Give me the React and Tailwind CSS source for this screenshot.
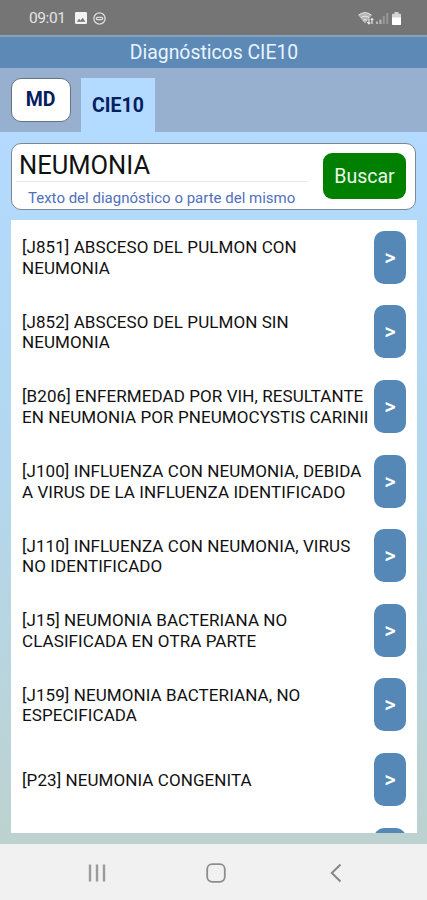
import React from "react";

const rows = [
  { lines: ["[J851] ABSCESO DEL PULMON CON", "NEUMONIA"] },
  { lines: ["[J852] ABSCESO DEL PULMON SIN", "NEUMONIA"] },
  { lines: ["[B206] ENFERMEDAD POR VIH, RESULTANTE", "EN NEUMONIA POR PNEUMOCYSTIS CARINII"] },
  { lines: ["[J100] INFLUENZA CON NEUMONIA, DEBIDA", "A VIRUS DE LA INFLUENZA IDENTIFICADO"] },
  { lines: ["[J110] INFLUENZA CON NEUMONIA, VIRUS", "NO IDENTIFICADO"] },
  { lines: ["[J15] NEUMONIA BACTERIANA NO", "CLASIFICADA EN OTRA PARTE"] },
  { lines: ["[J159] NEUMONIA BACTERIANA, NO", "ESPECIFICADA"] },
  { lines: ["[P23] NEUMONIA CONGENITA"] },
  { lines: [] },
];

function StatusBar() {
  return (
    <div className="flex h-[35px] shrink-0 items-center bg-[#757575] pl-[29px] pr-[26px] pt-[1px] text-[#e4e4e4]">
      <span className="w-[38px] pt-[2px] text-[15.500px] leading-none tracking-[-0.400px]">09:01</span>
      <svg className="ml-[8px]" width="12" height="12" viewBox="0 0 12 12">
        <path fillRule="evenodd" fill="#f2f2f2" d="M1.2 0h9.6Q12 0 12 1.2v9.6q0 1.2-1.2 1.2H1.2Q0 12 0 10.8V1.2Q0 0 1.2 0ZM1.8 9.8h8.6L7.7 5.8 5.6 8.4 4.1 6.8Z" />
      </svg>
      <svg className="ml-[6px]" width="13" height="13" viewBox="0 0 13 13" fill="none" stroke="#dedede" strokeWidth="1.3">
        <circle cx="6.5" cy="6.5" r="5.6" />
        <rect x="3.3" y="5.4" width="6.4" height="2.2" rx="1" />
      </svg>
      <div className="ml-auto flex items-center">
        <svg width="16" height="13" viewBox="0 0 16 13">
          <path d="M0.3 3.2Q7 -2 13.7 3.2L7 11.5Z" fill="#b5b5b5" />
          <path d="M0.5 3.1Q7 -1.9 13.5 3.1M2.9 5.7Q7 2.6 11.1 5.7M5 8.3Q7 6.8 9 8.3" fill="none" stroke="#e8e8e8" strokeWidth="1" />
          <path d="M11 6.5v5.5M9.3 10.2 11 12l1.3-1.5M14 12V6.5M12.8 8 14 6.5 15.3 8" fill="none" stroke="#f0f0f0" strokeWidth="1.1" />
        </svg>
        <svg className="ml-[2px]" width="13" height="12" viewBox="0 0 13 12">
          <path d="M0 9.5h2V12H0zM3.4 7.5h2V12h-2z" fill="#b8b8b8" />
          <path d="M6.8 4h2v8h-2zM10.2 1h2v11h-2z" fill="#969696" />
        </svg>
        <svg className="ml-[3px]" width="9" height="13" viewBox="0 0 9 13">
          <path d="M2.5 0h4v1.7H8q1 0 1 1V12q0 1-1 1H1q-1 0-1-1V2.700q0-1 1-1h1.500z" fill="#d5d5d5" />
          <path d="M0 5.500h9V12q0 1-1 1H1q-1 0-1-1z" fill="#fff" />
        </svg>
      </div>
    </div>
  );
}

function Tabs() {
  return (
    <div className="flex h-[64px] shrink-0 items-start bg-[#97b0cf] pl-[11px] font-bold text-[#03205f]">
      <div className="mt-[10px] flex h-[44px] w-[60px] items-center justify-center rounded-[10px] border border-[#64737f] bg-white pb-[1px] pr-[1px] text-[19.500px]">
        <span>MD</span>
      </div>
      <div className="ml-[10px] mt-[10px] flex h-[54px] w-[74px] items-center justify-center bg-[#b3daff] pt-[1px] text-[19.500px]">
        <span>CIE10</span>
      </div>
    </div>
  );
}

function SearchBox() {
  return (
    <div className="mx-[11px] mt-[11px] flex h-[67px] shrink-0 rounded-[10px] border border-[#7d8790] bg-white">
      <div className="w-[295px]">
        <div className="ml-[4px] h-[38px] border-b border-[#e6e6e6] pl-[3px] pt-[3px] text-[25.500px] leading-[36px] text-[#111]">NEUMONIA</div>
        <div className="pl-[16px] text-[15px] leading-[32px] text-[#4f70bd]">Texto del diagnóstico o parte del mismo</div>
      </div>
      <div className="ml-[16px] mt-[9px] flex h-[46px] w-[83px] items-center justify-center rounded-[9px] bg-[#008000] pt-[1px] text-[19.500px] text-[#edf8ed]">Buscar</div>
    </div>
  );
}

function Row({ lines }) {
  return (
    <li className="flex h-[74.600px] shrink-0 items-center pl-[11px] pr-[11px]">
      <div className="flex-1 whitespace-nowrap pt-[1px] text-[17px] leading-[20.500px] tracking-[0.080px] text-[#111]">
        {lines.map((line) => (
          <div key={line}><span>{line}</span></div>
        ))}
      </div>
      <div className="flex h-[53px] w-[32px] shrink-0 items-center justify-center rounded-[10px] bg-[#5587b7] text-[22px] font-medium text-white">
        {lines.length > 0 && <span>&gt;</span>}
      </div>
    </li>
  );
}

function NavigationBar() {
  return (
    <div className="flex h-[56px] shrink-0 items-center bg-[#f1f1f1] pl-[87px] pt-[2px]">
      <svg width="20" height="20" viewBox="0 0 20 20" fill="none" stroke="#9b9b9b" strokeWidth="2.400">
        <path d="M3 1.500v17M10 1.500v17M17 1.500v17" />
      </svg>
      <svg className="ml-[99px]" width="20" height="20" viewBox="0 0 20 20" fill="none" stroke="#8d8d8d" strokeWidth="1.800">
        <rect x="1.200" y="1.200" width="17.600" height="17.600" rx="5" />
      </svg>
      <svg className="ml-[104px]" width="12" height="20" viewBox="0 0 12 20" fill="none" stroke="#858585" strokeWidth="1.900">
        <path d="M10.500 1.500 1.800 10l8.700 8.500" />
      </svg>
    </div>
  );
}

export default function App() {
  return (
    <div className="flex h-[900px] w-[427px] flex-col overflow-hidden bg-[#f1f1f1] font-['Roboto',sans-serif]">
      <StatusBar />
      <header className="flex h-[33px] shrink-0 items-center justify-center border-t-2 border-[#87a0bb] bg-[#5d89b7] pl-[1px] text-[19.400px] text-[#eaf4ff]">
        <span>Diagnósticos CIE10</span>
      </header>
      <Tabs />
      <main className="flex h-[712px] shrink-0 flex-col bg-linear-to-b from-[#b3daff] via-[#b3d7ed] to-[#bdd2cf]">
        <SearchBox />
        <ul className="mx-[11px] mt-[10px] flex h-[613px] w-[406px] shrink-0 flex-col overflow-hidden bg-white">
          {rows.map((row, i) => (
            <Row key={i} lines={row.lines} />
          ))}
        </ul>
      </main>
      <NavigationBar />
    </div>
  );
}
